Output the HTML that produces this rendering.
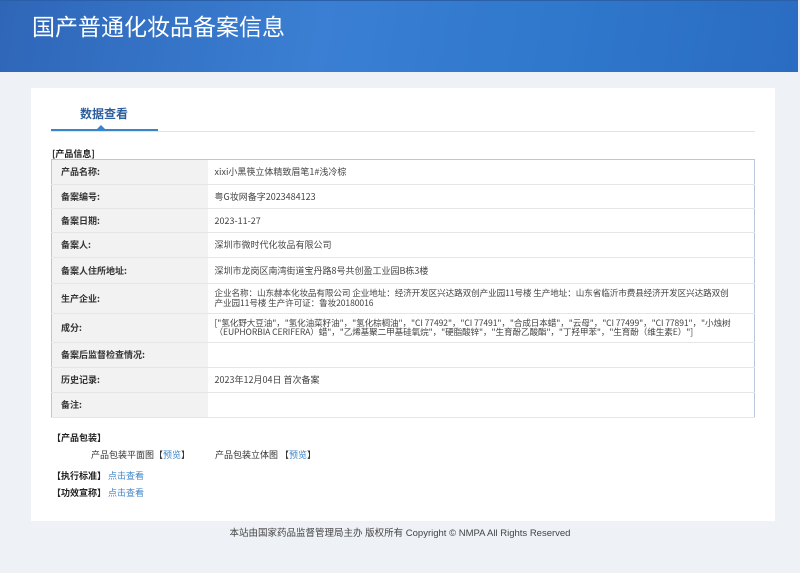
<!DOCTYPE html>
<html><head><meta charset="utf-8"><style>
*{margin:0;padding:0;box-sizing:border-box}
body{width:800px;height:573px;background:#eef1f5;font-family:"Liberation Sans","Noto Sans CJK SC",sans-serif;position:relative;overflow:hidden;color:#333}
.hd{position:absolute;left:0;top:0;width:798px;height:72px;background:linear-gradient(100deg,#2f66b8 0%,#3a7fd3 40%,#2f78cc 70%,#2a6cc2 100%);border-top:1px solid #2a5faa}
.hd h1{position:absolute;left:32px;top:7px;font-size:23px;font-weight:normal;color:#fff;font-family:"Noto Sans CJK SC",sans-serif}
.card{position:absolute;left:31px;top:88px;width:744px;height:433px;background:#fff}
.tab{position:absolute;left:49px;top:17px;font-size:12px;font-weight:bold;color:#2d5f9e;font-family:"Noto Sans CJK SC",sans-serif}
.sep{position:absolute;left:20px;top:43px;width:704px;height:1px;background:#e3e3e3}
.ul{position:absolute;left:20px;top:41px;width:107px;height:2px;background:#3a84cc}
.tri{position:absolute;left:66px;top:37px;width:0;height:0;border-left:4px solid transparent;border-right:4px solid transparent;border-bottom:4px solid #3a84cc}
.sec{position:absolute;font-size:9px;font-weight:bold;color:#222;font-family:"Noto Sans CJK SC",sans-serif}
table{position:absolute;left:20px;top:71px;width:704px;border-collapse:collapse;border:1px solid #b8c8dc;font-size:9px;font-family:"Noto Sans CJK SC",sans-serif;table-layout:fixed}
td{border-bottom:1px solid #e6e6e6;vertical-align:middle;line-height:9.5px}
td.l{width:156px;background:#f2f2f2;font-weight:bold;padding-left:9px;color:#333}
td.v{padding-left:7px;color:#444;white-space:nowrap;overflow:hidden}
td.s{font-size:8.6px;letter-spacing:-0.1px}
a{color:#3f85c6;text-decoration:none}
.t{position:absolute;font-size:9px;font-family:"Noto Sans CJK SC",sans-serif;color:#333}
.ft{position:absolute;left:0;width:800px;top:525px;text-align:center;font-size:9.5px;color:#444;font-family:"Liberation Sans","Noto Sans CJK SC",sans-serif}
</style></head><body>
<div class="hd"><h1>国产普通化妆品备案信息</h1></div>
<div class="card">
<div class="tab">数据查看</div>
<div class="sep"></div><div class="ul"></div><div class="tri"></div>
<div class="sec" style="left:21px;top:59px">[产品信息]</div>
<table>
<tr style="height:25px"><td class="l">产品名称:</td><td class="v">xixi小黑筷立体精致眉笔1#浅冷棕</td></tr>
<tr style="height:24px"><td class="l">备案编号:</td><td class="v">粤G妆网备字2023484123</td></tr>
<tr style="height:24px"><td class="l">备案日期:</td><td class="v">2023-11-27</td></tr>
<tr style="height:25px"><td class="l">备案人:</td><td class="v">深圳市微时代化妆品有限公司</td></tr>
<tr style="height:26px"><td class="l">备案人住所地址:</td><td class="v">深圳市龙岗区南湾街道宝丹路8号共创盈工业园B栋3楼</td></tr>
<tr style="height:30px"><td class="l">生产企业:</td><td class="v s">企业名称：山东赫本化妆品有限公司 企业地址：经济开发区兴达路双创产业园11号楼 生产地址：山东省临沂市费县经济开发区兴达路双创<br>产业园11号楼 生产许可证：鲁妆20180016</td></tr>
<tr style="height:29px"><td class="l">成分:</td><td class="v s">["氢化野大豆油"，"氢化油菜籽油"，"氢化棕榈油"，"CI 77492"，"CI 77491"，"合成日本蜡"，"云母"，"CI 77499"，"CI 77891"，"小烛树<br>（EUPHORBIA CERIFERA）蜡"，"乙烯基聚二甲基硅氧烷"，"硬脂酸锌"，"生育酚乙酸酯"，"丁羟甲苯"，"生育酚（维生素E）"]</td></tr>
<tr style="height:25px"><td class="l">备案后监督检查情况:</td><td class="v"></td></tr>
<tr style="height:25px"><td class="l">历史记录:</td><td class="v">2023年12月04日 首次备案</td></tr>
<tr style="height:25px"><td class="l">备注:</td><td class="v"></td></tr>
</table>
<div class="sec" style="left:21px;top:343px">【产品包装】</div>
<div class="t" style="left:60px;top:360px">产品包装平面图【<a>预览</a>】</div>
<div class="t" style="left:184px;top:360px">产品包装立体图 【<a>预览</a>】</div>
<div class="sec" style="left:21px;top:381px">【执行标准】 <a style="font-weight:normal">点击查看</a></div>
<div class="sec" style="left:21px;top:398px">【功效宣称】 <a style="font-weight:normal">点击查看</a></div>
</div>
<div class="ft">本站由国家药品监督管理局主办 版权所有 Copyright © NMPA All Rights Reserved</div>
</body></html>
